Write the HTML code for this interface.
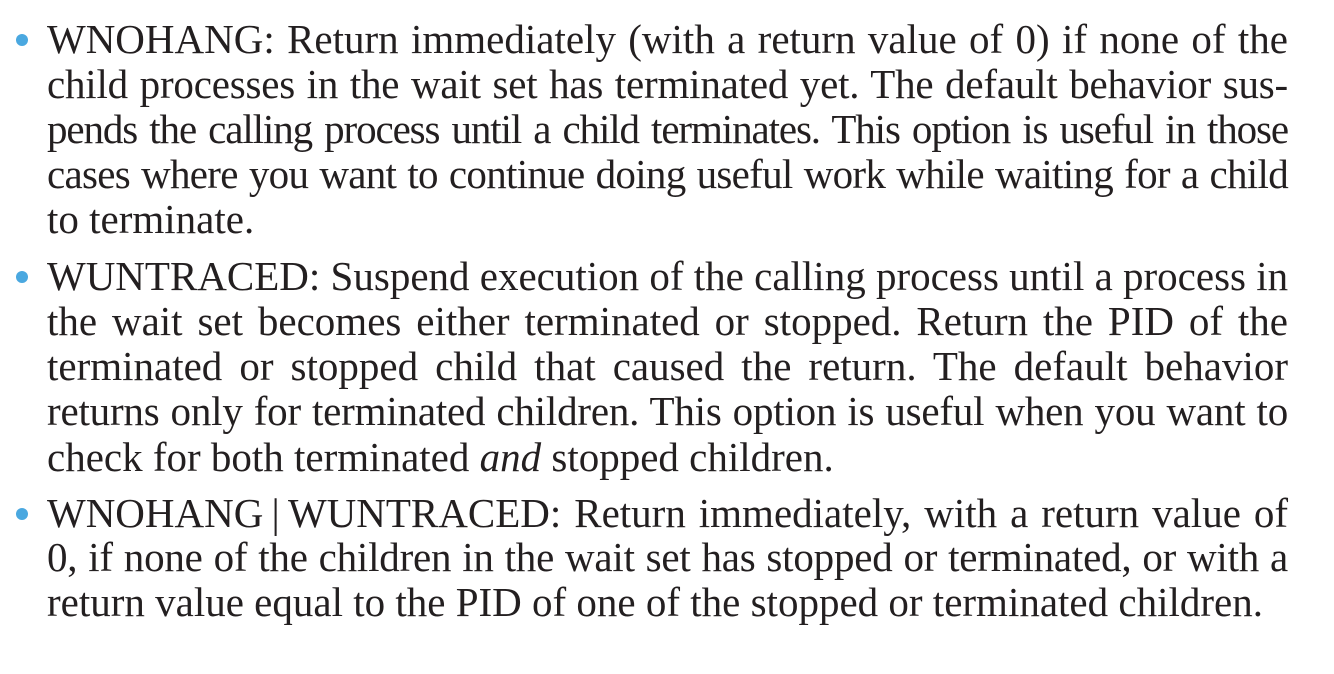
<!DOCTYPE html>
<html><head><meta charset="utf-8"><style>
html,body{margin:0;padding:0;background:#fff;width:1334px;height:674px;overflow:hidden}
.l{position:absolute;left:47px;width:1241px;font-family:"Liberation Serif",serif;font-size:41px;line-height:45px;height:45px;color:#231f20;white-space:nowrap;text-align:justify;text-align-last:justify}
.e{text-align-last:left}
.d{position:absolute;left:16px;width:12px;height:12px;border-radius:50%;background:#4aa8e0}
</style></head><body>
<div class="d" style="top:34px"></div>
<div class="l" style="top:17px">WNOHANG: Return immediately (with a return value of 0) if none of the</div>
<div class="l" style="top:62px;letter-spacing:-0.2px">child processes in the wait set has terminated yet. The default behavior sus-</div>
<div class="l" style="top:107px;letter-spacing:-1.1px;word-spacing:-2px">pends the calling process until a child terminates. This option is useful in those</div>
<div class="l" style="top:152px;letter-spacing:-0.7px;word-spacing:-1px">cases where you want to continue doing useful work while waiting for a child</div>
<div class="l e" style="top:197px">to terminate.</div>
<div class="d" style="top:271px"></div>
<div class="l" style="top:254px">WUNTRACED: Suspend execution of the calling process until a process in</div>
<div class="l" style="top:299px">the wait set becomes either terminated or stopped. Return the PID of the</div>
<div class="l" style="top:344px">terminated or stopped child that caused the return. The default behavior</div>
<div class="l" style="top:389px;letter-spacing:-0.2px">returns only for terminated children. This option is useful when you want to</div>
<div class="l e" style="top:435px">check for both terminated <i>and</i> stopped children.</div>
<div class="d" style="top:508px"></div>
<div class="l" style="top:491px">WNOHANG&#8201;|&#8201;WUNTRACED: Return immediately, with a return value of</div>
<div class="l" style="top:535px;letter-spacing:-0.2px">0, if none of the children in the wait set has stopped or terminated, or with a</div>
<div class="l e" style="top:580px">return value equal to the PID of one of the stopped or terminated children.</div>
</body></html>
